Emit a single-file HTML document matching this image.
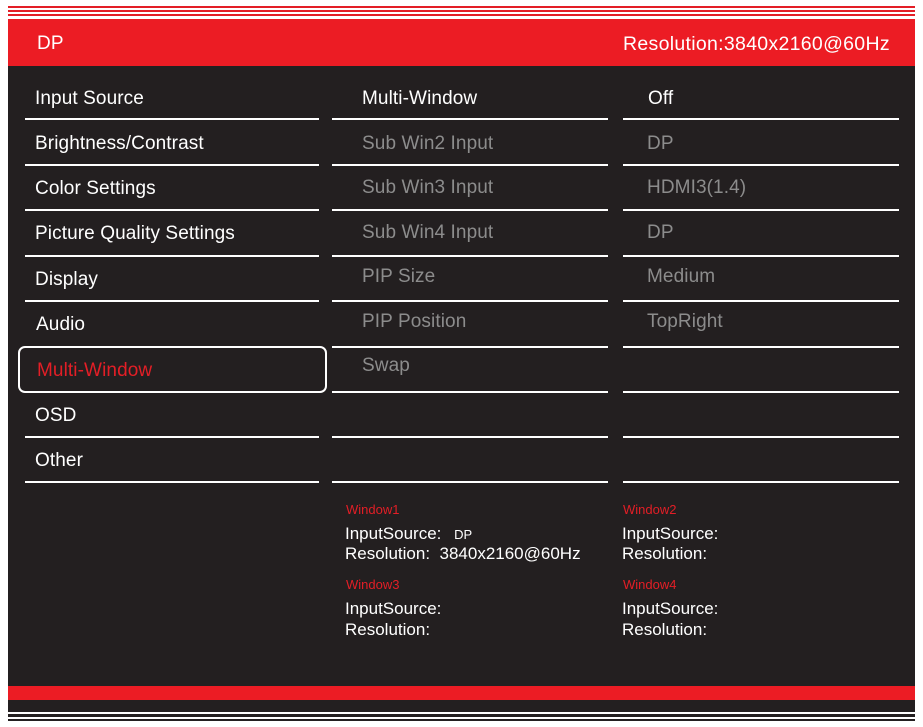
<!DOCTYPE html>
<html><head><style>
*{margin:0;padding:0;box-sizing:border-box}
body{width:923px;height:727px;background:#fff;position:relative;overflow:hidden;font-family:"Liberation Sans",Arial,sans-serif}
.a{position:absolute}
.rl{position:absolute;left:8px;width:907px;height:2px;background:#e31e26}
.t{position:absolute;font-size:19px;color:#fff;white-space:nowrap;line-height:22px;letter-spacing:0.1px}
.g{color:#8c8c8c}
.ln{position:absolute;height:2px;background:#fff}
.s{position:absolute;white-space:nowrap;color:#fff;font-size:17px;line-height:18px}
.r{position:absolute;white-space:nowrap;color:#e31e26;font-size:13px;line-height:15px}
</style></head><body>
<div class="rl" style="top:6px"></div>
<div class="rl" style="top:10px"></div>
<div class="rl" style="top:14px"></div>
<div class="a" style="left:8px;top:19px;width:907px;height:47px;background:#ec1c24"></div>
<div class="t" style="left:37px;top:33px">DP</div>
<div class="t" style="left:623px;top:33px;font-size:19.5px;letter-spacing:0.3px">Resolution:3840x2160@60Hz</div>
<div class="a" style="left:8px;top:66px;width:907px;height:655px;background:#231f20"></div>
<div class="a" style="left:8px;top:686px;width:907px;height:14px;background:#ec1c24"></div>
<div class="a" style="left:8px;top:712px;width:907px;height:2px;background:#fff"></div>
<div class="a" style="left:8px;top:717px;width:907px;height:2px;background:#fff"></div>

<!-- left column -->
<div class="t" style="left:35px;top:88px">Input Source</div>
<div class="t" style="left:35px;top:133px">Brightness/Contrast</div>
<div class="t" style="left:35px;top:178px">Color Settings</div>
<div class="t" style="left:35px;top:223px">Picture Quality Settings</div>
<div class="t" style="left:35px;top:269px">Display</div>
<div class="t" style="left:36px;top:314px">Audio</div>
<div class="a" style="left:18px;top:346px;width:309px;height:47px;border:2px solid #fff;border-radius:7px"></div>
<div class="t" style="left:37px;top:360px;color:#e31e26">Multi-Window</div>
<div class="t" style="left:35px;top:405px">OSD</div>
<div class="t" style="left:35px;top:450px">Other</div>
<div class="ln" style="left:25px;width:294px;top:118px"></div>
<div class="ln" style="left:25px;width:294px;top:164px"></div>
<div class="ln" style="left:25px;width:294px;top:209px"></div>
<div class="ln" style="left:25px;width:294px;top:255px"></div>
<div class="ln" style="left:25px;width:294px;top:300px"></div>
<div class="ln" style="left:25px;width:294px;top:436px"></div>
<div class="ln" style="left:25px;width:294px;top:481px"></div>

<!-- middle -->
<div class="t" style="left:362px;top:88px">Multi-Window</div>
<div class="t g" style="left:362px;top:133px">Sub Win2 Input</div>
<div class="t g" style="left:362px;top:177px">Sub Win3 Input</div>
<div class="t g" style="left:362px;top:222px">Sub Win4 Input</div>
<div class="t g" style="left:362px;top:266px">PIP Size</div>
<div class="t g" style="left:362px;top:311px">PIP Position</div>
<div class="t g" style="left:362px;top:355px">Swap</div>
<!-- right -->
<div class="t" style="left:648px;top:88px">Off</div>
<div class="t g" style="left:647px;top:133px">DP</div>
<div class="t g" style="left:647px;top:177px">HDMI3(1.4)</div>
<div class="t g" style="left:647px;top:222px">DP</div>
<div class="t g" style="left:647px;top:266px">Medium</div>
<div class="t g" style="left:647px;top:311px">TopRight</div>

<div class="ln" style="left:332px;width:276px;top:118px"></div>
<div class="ln" style="left:332px;width:276px;top:164px"></div>
<div class="ln" style="left:332px;width:276px;top:209px"></div>
<div class="ln" style="left:332px;width:276px;top:255px"></div>
<div class="ln" style="left:332px;width:276px;top:300px"></div>
<div class="ln" style="left:332px;width:276px;top:346px"></div>
<div class="ln" style="left:332px;width:276px;top:391px"></div>
<div class="ln" style="left:332px;width:276px;top:436px"></div>
<div class="ln" style="left:332px;width:276px;top:481px"></div>
<div class="ln" style="left:623px;width:276px;top:118px"></div>
<div class="ln" style="left:623px;width:276px;top:164px"></div>
<div class="ln" style="left:623px;width:276px;top:209px"></div>
<div class="ln" style="left:623px;width:276px;top:255px"></div>
<div class="ln" style="left:623px;width:276px;top:300px"></div>
<div class="ln" style="left:623px;width:276px;top:346px"></div>
<div class="ln" style="left:623px;width:276px;top:391px"></div>
<div class="ln" style="left:623px;width:276px;top:436px"></div>
<div class="ln" style="left:623px;width:276px;top:481px"></div>

<!-- windows -->
<div class="r" style="left:346px;top:502px">Window1</div>
<div class="s" style="left:345px;top:525px">InputSource: <span style="font-size:13px;margin-left:8px">DP</span></div>
<div class="s" style="left:345px;top:545px">Resolution:&nbsp; 3840x2160@60Hz</div>
<div class="r" style="left:346px;top:577px">Window3</div>
<div class="s" style="left:345px;top:600px">InputSource:</div>
<div class="s" style="left:345px;top:621px">Resolution:</div>
<div class="r" style="left:623px;top:502px">Window2</div>
<div class="s" style="left:622px;top:525px">InputSource:</div>
<div class="s" style="left:622px;top:545px">Resolution:</div>
<div class="r" style="left:623px;top:577px">Window4</div>
<div class="s" style="left:622px;top:600px">InputSource:</div>
<div class="s" style="left:622px;top:621px">Resolution:</div>
</body></html>
